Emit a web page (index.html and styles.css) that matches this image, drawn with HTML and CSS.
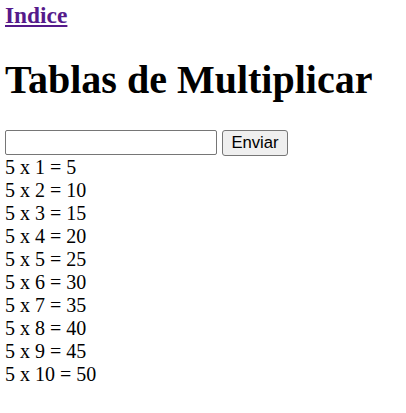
FILE: index.html
```html
<!DOCTYPE html>
<html lang="es">
<head>
<meta charset="utf-8">
<title>Tablas de Multiplicar</title>
<link rel="stylesheet" href="styles.css">
</head>
<body>
<h3 class="nav"><a class="nav-link" href="#">Indice</a></h3>
<h1 class="title">Tablas de Multiplicar</h1>
<form class="form">
<input class="field" type="text"><button class="btn" type="button">Enviar</button>
</form>
<div class="results">
5 x 1 = 5<br>
5 x 2 = 10<br>
5 x 3 = 15<br>
5 x 4 = 20<br>
5 x 5 = 25<br>
5 x 6 = 30<br>
5 x 7 = 35<br>
5 x 8 = 40<br>
5 x 9 = 45<br>
5 x 10 = 50
</div>
</body>
</html>
```
FILE: styles.css
```css
html, body {
  background: #fff;
}
body {
  margin: 0;
  padding: 2px 5px 0;
  font-family: "Liberation Serif", "Times New Roman", serif;
  font-size: 20px;
  color: #000;
}
.nav {
  margin: 0;
  font-size: 23.4px;
  font-weight: bold;
}
.nav-link {
  color: #551a8b;
  text-decoration: underline;
}
.title {
  font-size: 40px;
  font-weight: bold;
  margin: 26.8px 0;
}
.form {
  margin: 0;
  display: flex;
  align-items: center;
  gap: 5px;
}
.field {
  box-sizing: border-box;
  width: 212px;
  height: 25px;
  margin: 0;
  border: 1px solid #767676;
  border-radius: 2px;
  padding: 1px 2px;
  font-size: 16.67px;
  font-family: "Liberation Sans", Arial, sans-serif;
  background: #fff;
}
.btn {
  box-sizing: border-box;
  width: 66px;
  height: 26px;
  margin: 0;
  padding: 1px 0;
  border: 1px solid #767676;
  border-radius: 3px;
  background: #efefef;
  color: #000;
  font-size: 16.67px;
  font-family: "Liberation Sans", Arial, sans-serif;
  text-align: center;
}
.results {
  line-height: 23px;
}
```
